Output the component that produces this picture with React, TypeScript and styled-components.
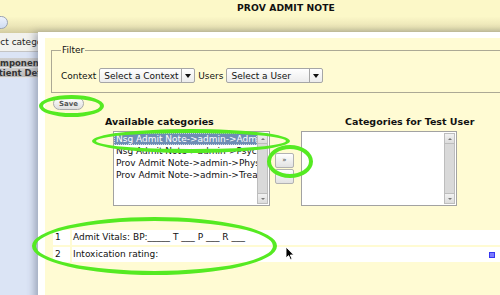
import styled, { createGlobalStyle } from "styled-components";

const GlobalStyle = createGlobalStyle`
  html, body {
    margin: 0;
    padding: 0;
    background: #dbe4f5;
  }
  * {
    box-sizing: border-box;
  }
`;

const Stage = styled.div`
  position: relative;
  width: 500px;
  height: 295px;
  overflow: hidden;
  background: #dbe4f5;
  font-family: "DejaVu Sans", "Liberation Sans", sans-serif;
  font-size: 9px;
  color: #111;
  display: flex;
  flex-direction: column;
`;

const Header = styled.div`
  height: 33px;
  flex-shrink: 0;
  background: linear-gradient(
    to bottom,
    #fcf8c8 0,
    #fcf8c8 50%,
    #ece6b8 78%,
    #d3cca0 100%
  );
  display: flex;
  flex-direction: column;
`;

const Title = styled.div`
  padding: 2px 0 0 237px;
  font-weight: bold;
  font-size: 9.2px;
  line-height: 11px;
  letter-spacing: 0.1px;
`;

const PillButton = styled.div`
  margin: 3px 0 0 -20px;
  width: 28px;
  height: 13px;
  border-radius: 7px;
  border: 1px solid #9aa3b4;
  background: linear-gradient(to bottom, #eef3fc, #cfdcf2);
`;

const Body = styled.div`
  flex: 1;
  display: flex;
`;

const Sidebar = styled.div`
  width: 40px;
  overflow: hidden;
  display: flex;
  flex-direction: column;
`;

const SearchBox = styled.div`
  height: 19px;
  background: #f2f2ee;
  border-bottom: 1px solid #c4c4c4;
  padding-top: 4px;
  white-space: nowrap;
  font-size: 9px;
  color: #222;
`;

const Clip = styled.span<{ $shift: number }>`
  display: inline-block;
  margin-left: ${(p) => -p.$shift}px;
`;

const SectionBar = styled.div<{ $top?: number }>`
  margin-top: ${(p) => p.$top ?? 0}px;
  height: 10px;
  line-height: 10px;
  background: linear-gradient(to bottom, #cfcfcf, #b8b8b8);
  border-bottom: 1px solid #e2e2e2;
  white-space: nowrap;
  font-weight: bold;
  font-size: 8.5px;
  color: #333;
`;

const Dialog = styled.div`
  position: absolute;
  left: 38px;
  top: 32px;
  right: -30px;
  bottom: -20px;
  border-top: 6px solid #fff;
  border-left: 7px solid #fff;
  background: #fffbd3;
  box-shadow: -4px 0 7px rgba(60, 70, 95, 0.35);
`;

const Fieldset = styled.fieldset`
  margin: 7px 0 0 6px;
  border: 1px solid #aca995;
  padding: 0 0 9px 9px;
`;

const Legend = styled.legend`
  padding: 0 1px;
  font-size: 9px;
  line-height: 11px;
`;

const FilterRow = styled.div`
  margin-top: 12px;
  display: flex;
  align-items: center;
  gap: 3px;
  height: 15px;
`;

const SelectBox = styled.div<{ $width: number }>`
  width: ${(p) => p.$width}px;
  height: 15px;
  border: 1px solid #a6a6a6;
  border-radius: 2px;
  background: linear-gradient(to bottom, #ffffff, #ececec);
  display: flex;
  align-items: center;
  justify-content: space-between;
  padding-left: 4px;
`;

const SelectArrow = styled.div`
  width: 13px;
  height: 100%;
  border-left: 1px solid #a6a6a6;
  display: flex;
  align-items: center;
  justify-content: center;
  &::after {
    content: "";
    border-left: 3px solid transparent;
    border-right: 3px solid transparent;
    border-top: 4px solid #111;
  }
`;

const SaveButton = styled.div`
  margin: 4px 0 0 8px;
  width: 31px;
  height: 13px;
  border: 1px solid #a9a9a9;
  border-radius: 7px;
  background: linear-gradient(to bottom, #ffffff, #dedede);
  display: flex;
  align-items: center;
  justify-content: center;
  font-size: 7px;
  font-weight: bold;
  color: #555;
`;

const HeadingRow = styled.div`
  margin-top: 6px;
  padding-left: 60px;
  display: grid;
  grid-template-columns: 240px auto;
  font-weight: bold;
  font-size: 9.5px;
  line-height: 11px;
`;

const ListRow = styled.div`
  margin-top: 4px;
  padding-left: 68px;
  display: flex;
  align-items: flex-start;
`;

const ListBox = styled.div<{ $width: number }>`
  width: ${(p) => p.$width}px;
  height: 75px;
  border: 1px solid #a2a2a2;
  background: #fff;
  display: flex;
`;

const Options = styled.div`
  flex: 1;
  overflow: hidden;
  padding-top: 1px;
`;

const Option = styled.div<{ $selected?: boolean }>`
  height: 12px;
  line-height: 12px;
  padding-left: 2px;
  white-space: nowrap;
  font-size: 9px;
  color: ${(p) => (p.$selected ? "#fff" : "#111")};
  background: ${(p) => (p.$selected ? "#6e8db5" : "transparent")};
  outline: ${(p) => (p.$selected ? "1px dotted #cdd8e6" : "none")};
  outline-offset: -1px;
`;

const Scrollbar = styled.div`
  width: 11px;
  margin: 1px 1px 1px 0;
  border: 1px solid #bdbdbd;
  background: #d9d9d9;
  display: flex;
  flex-direction: column;
  justify-content: space-between;
`;

const ScrollArrow = styled.div<{ $down?: boolean }>`
  height: 10px;
  background: linear-gradient(to bottom, #f2f2f2, #dcdcdc);
  border-bottom: ${(p) => (p.$down ? "none" : "1px solid #bdbdbd")};
  border-top: ${(p) => (p.$down ? "1px solid #bdbdbd" : "none")};
  display: flex;
  align-items: center;
  justify-content: center;
  &::after {
    content: "";
    border-left: 2px solid transparent;
    border-right: 2px solid transparent;
    ${(p) =>
      p.$down ? "border-top: 2px solid #777;" : "border-bottom: 2px solid #777;"}
  }
`;

const Movers = styled.div`
  margin: 0 7px 0 5px;
  padding-top: 22px;
  display: flex;
  flex-direction: column;
  gap: 1px;
`;

const MoveButton = styled.div`
  width: 19px;
  height: 15px;
  border: 1px solid #b2b2b2;
  border-radius: 2px;
  background: linear-gradient(to bottom, #ffffff, #e2e2e2);
  display: flex;
  align-items: center;
  justify-content: center;
  font-size: 7px;
  line-height: 1;
  color: #444;
`;

const Table = styled.div`
  margin: 24px 0 0 8px;
  display: flex;
  flex-direction: column;
  gap: 2px;
`;

const Row = styled.div`
  width: 447px;
  height: 15px;
  display: grid;
  grid-template-columns: 17px 1fr;
  column-gap: 2px;
  font-size: 9px;
  line-height: 15px;
`;

const Cell = styled.div<{ $pad: number }>`
  background: #fff;
  padding-left: ${(p) => p.$pad}px;
  display: flex;
  align-items: center;
  justify-content: space-between;
  white-space: pre;
`;

const Marker = styled.div`
  width: 6px;
  height: 6px;
  margin-right: 5px;
  border: 1px solid #3535f0;
  background: #7a7aff;
`;

const Ring = styled.div<{ $x: number; $y: number; $w: number; $h: number }>`
  position: absolute;
  left: ${(p) => p.$x}px;
  top: ${(p) => p.$y}px;
  width: ${(p) => p.$w}px;
  height: ${(p) => p.$h}px;
  border: 4px solid #55ea22;
  border-radius: 50%;
  pointer-events: none;
`;

const Cursor = styled.svg`
  position: absolute;
  left: 285px;
  top: 246px;
`;

const available = [
  "Nsg Admit Note->admin->Admit Vitals",
  "Nsg Admit Note->admin->Psych",
  "Prov Admit Note->admin->Physical",
  "Prov Admit Note->admin->Treatment",
];

function Scroll() {
  return (
    <Scrollbar>
      <ScrollArrow />
      <ScrollArrow $down />
    </Scrollbar>
  );
}

export default function App() {
  return (
    <Stage>
      <GlobalStyle />
      <Header>
        <Title>PROV ADMIT NOTE</Title>
        <PillButton />
      </Header>
      <Body>
        <Sidebar>
          <SearchBox>
            <Clip $shift={19}>Select categories</Clip>
          </SearchBox>
          <SectionBar $top={6}>
            <Clip $shift={12}>Components</Clip>
          </SectionBar>
          <SectionBar>
            <Clip $shift={13}>Patient Details</Clip>
          </SectionBar>
        </Sidebar>
      </Body>

      <Dialog>
        <Fieldset>
          <Legend>Filter</Legend>
          <FilterRow>
            <span>Context</span>
            <SelectBox $width={96}>
              Select a Context
              <SelectArrow />
            </SelectBox>
            <span>Users</span>
            <SelectBox $width={97}>
              Select a User
              <SelectArrow />
            </SelectBox>
          </FilterRow>
        </Fieldset>

        <SaveButton>Save</SaveButton>

        <HeadingRow>
          <span>Available categories</span>
          <span>Categories for Test User</span>
        </HeadingRow>

        <ListRow>
          <ListBox $width={157}>
            <Options>
              {available.map((item, i) => (
                <Option key={item} $selected={i === 0}>
                  {item}
                </Option>
              ))}
            </Options>
            <Scroll />
          </ListBox>
          <Movers>
            <MoveButton>»</MoveButton>
            <MoveButton>«</MoveButton>
          </Movers>
          <ListBox $width={156}>
            <Options />
            <Scroll />
          </ListBox>
        </ListRow>

        <Table>
          <Row>
            <Cell $pad={2}>1</Cell>
            <Cell $pad={1}>Admit Vitals: BP:_____ T ___ P ___ R ___</Cell>
          </Row>
          <Row>
            <Cell $pad={2}>2</Cell>
            <Cell $pad={1}>
              Intoxication rating:
              <Marker />
            </Cell>
          </Row>
        </Table>
      </Dialog>

      <Ring $x={39} $y={95} $w={65} $h={22} />
      <Ring $x={92} $y={129} $w={198} $h={24} />
      <Ring $x={267} $y={145} $w={46} $h={33} />
      <Ring $x={32} $y={217} $w={245} $h={58} />

      <Cursor width="10" height="15" viewBox="0 0 10 15">
        <path
          d="M1 1 L1 12 L3.6 9.6 L5.4 13.6 L7 12.9 L5.3 9 L8.8 9 Z"
          fill="#000"
          stroke="#fff"
          strokeWidth="0.9"
          strokeLinejoin="round"
        />
      </Cursor>
    </Stage>
  );
}
